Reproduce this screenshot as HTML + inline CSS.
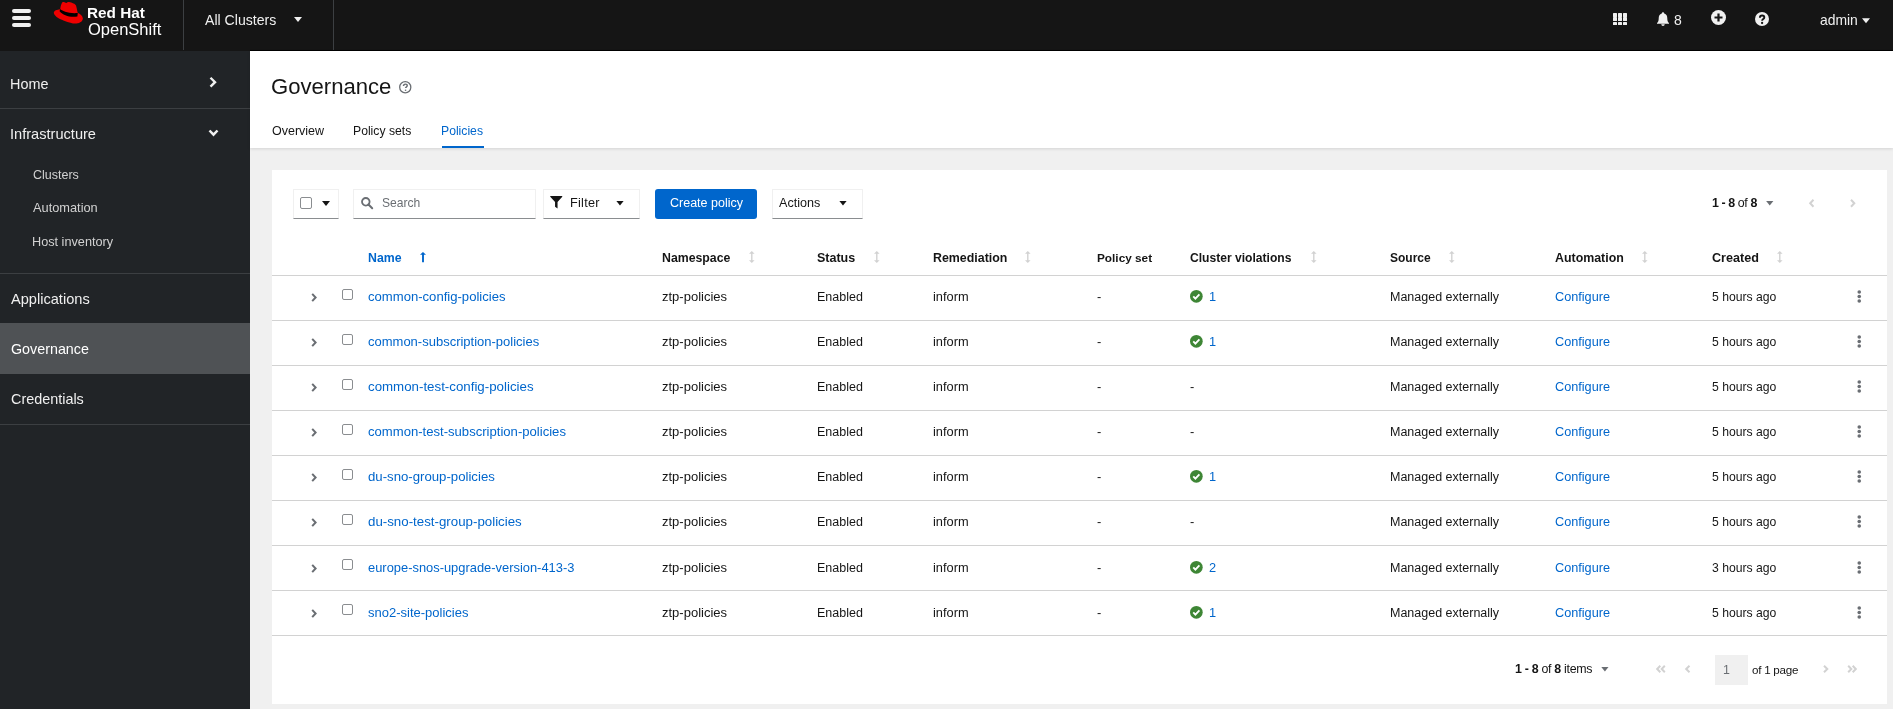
<!DOCTYPE html>
<html><head><meta charset="utf-8"><title>Governance - Policies</title>
<style>
html,body{margin:0;padding:0;width:1893px;height:709px;overflow:hidden;background:#f0f0f0;font-family:"Liberation Sans", sans-serif;}
.t{position:absolute;white-space:nowrap;line-height:1;will-change:transform}
.t b{font-weight:700;}
svg{display:block;overflow:visible}
</style></head><body>
<div style="position:absolute;left:0px;top:0px;width:1893px;height:50px;background:#151515"></div>
<div style="position:absolute;left:250px;top:50px;width:1643px;height:1px;background:#000"></div>
<div style="position:absolute;left:0px;top:50px;width:250px;height:1px;background:#151515"></div>
<div style="position:absolute;left:12px;top:9px;width:19px;height:4px;background:#f0f0f0;border-radius:2px"></div>
<div style="position:absolute;left:12px;top:16px;width:19px;height:4px;background:#f0f0f0;border-radius:2px"></div>
<div style="position:absolute;left:12px;top:23px;width:19px;height:4px;background:#f0f0f0;border-radius:2px"></div>
<svg style="position:absolute;left:50px;top:0px;" width="36" height="27" viewBox="0 0 36 27"><path d="M10.2 9.2 C7 9.6 3.8 10.6 3.8 12.8 C3.8 15.5 8 18.5 14 20.8 C19 22.7 22.5 23.6 25 23.6 C28.5 23.6 32.8 22 32.8 18.5 C32.8 16 30.5 14 28 13 Z" fill="#ee0000"/><path d="M10.2 9.4 C10.4 6.5 11.5 3.5 12.6 2.1 C14 1.8 15.5 2.8 16.4 2.9 C17.2 2.4 18 1.8 19 2 C22 2.5 25.5 4 26 5.5 C26.8 8 27.2 11 27.8 13.3 L27.8 14 L10 10 Z" fill="#ee0000"/><path d="M10.1 9.1 C12 11 19 14 27.8 13.1 L27.4 16.4 C21 17.9 13 15.6 9.6 11.3 Z" fill="#000"/></svg>
<div class="t" style="left:87.30px;top:5px;font-size:15.3px;color:#ffffff;font-weight:700;">Red Hat</div>
<div class="t" style="left:87.50px;top:21px;font-size:16.5px;color:#ffffff;font-weight:400;">OpenShift</div>
<div style="position:absolute;left:183px;top:0px;width:1px;height:50px;background:#3c3f42"></div>
<div style="position:absolute;left:333px;top:0px;width:1px;height:50px;background:#3c3f42"></div>
<div class="t" style="left:204.50px;top:13px;font-size:14.1px;color:#f0f0f0;font-weight:400;">All Clusters</div>
<svg style="position:absolute;left:294px;top:17px;" width="8" height="5" viewBox="0 0 8 5"><path d="M0 0H8L4 5Z" fill="#f0f0f0"/></svg>
<div style="position:absolute;left:1613px;top:13.0px;width:4px;height:3.6px;background:#f0f0f0;border-radius:0.5px"></div>
<div style="position:absolute;left:1613px;top:17.4px;width:4px;height:3.6px;background:#f0f0f0;border-radius:0.5px"></div>
<div style="position:absolute;left:1613px;top:21.8px;width:4px;height:3.6px;background:#f0f0f0;border-radius:0.5px"></div>
<div style="position:absolute;left:1618px;top:13.0px;width:4px;height:3.6px;background:#f0f0f0;border-radius:0.5px"></div>
<div style="position:absolute;left:1618px;top:17.4px;width:4px;height:3.6px;background:#f0f0f0;border-radius:0.5px"></div>
<div style="position:absolute;left:1618px;top:21.8px;width:4px;height:3.6px;background:#f0f0f0;border-radius:0.5px"></div>
<div style="position:absolute;left:1623px;top:13.0px;width:4px;height:3.6px;background:#f0f0f0;border-radius:0.5px"></div>
<div style="position:absolute;left:1623px;top:17.4px;width:4px;height:3.6px;background:#f0f0f0;border-radius:0.5px"></div>
<div style="position:absolute;left:1623px;top:21.8px;width:4px;height:3.6px;background:#f0f0f0;border-radius:0.5px"></div>
<svg style="position:absolute;left:1657px;top:12px;" width="12" height="14" viewBox="0 0 12 14"><path d="M6 0.3 C6.8 0.3 7.2 0.9 7.2 1.5 C9.5 2.1 10.3 4 10.3 6.5 C10.3 9 10.8 10 12 11 V11.8 H0 V11 C1.2 10 1.7 9 1.7 6.5 C1.7 4 2.5 2.1 4.8 1.5 C4.8 0.9 5.2 0.3 6 0.3 Z M4.3 12.3 H7.7 C7.7 13.2 7 13.9 6 13.9 C5 13.9 4.3 13.2 4.3 12.3 Z" fill="#f0f0f0"/></svg>
<div class="t" style="left:1674.00px;top:13px;font-size:14px;color:#f0f0f0;font-weight:400;">8</div>
<svg style="position:absolute;left:1711px;top:10px;" width="15" height="15" viewBox="0 0 15 15"><circle cx="7.5" cy="7.5" r="7.5" fill="#f0f0f0"/><path d="M7.5 3.5V11.5M3.5 7.5H11.5" stroke="#151515" stroke-width="2.2"/></svg>
<svg style="position:absolute;left:1755px;top:12px;" width="14" height="14" viewBox="0 0 14 14"><circle cx="7" cy="7" r="7" fill="#f0f0f0"/><path d="M4.9 5.8 C4.9 4.3 5.9 3.5 7.1 3.5 C8.4 3.5 9.3 4.3 9.3 5.4 C9.3 6.9 7.1 7.1 7.1 8.8" stroke="#151515" stroke-width="1.9" fill="none"/><circle cx="7.1" cy="11" r="1.15" fill="#151515"/></svg>
<div class="t" style="left:1820.00px;top:14px;font-size:13.9px;color:#f0f0f0;font-weight:400;">admin</div>
<svg style="position:absolute;left:1862px;top:17.5px;" width="8" height="5.5" viewBox="0 0 8 5"><path d="M0 0H8L4 5Z" fill="#f0f0f0"/></svg>
<div style="position:absolute;left:0px;top:51px;width:250px;height:658px;background:#212427"></div>
<div style="position:absolute;left:0px;top:108px;width:250px;height:1px;background:#3c3f42"></div>
<div style="position:absolute;left:0px;top:273px;width:250px;height:1px;background:#3c3f42"></div>
<div style="position:absolute;left:0px;top:424px;width:250px;height:1px;background:#3c3f42"></div>
<div style="position:absolute;left:0px;top:323px;width:250px;height:51px;background:#4f5255"></div>
<div class="t" style="left:10.00px;top:77px;font-size:14.4px;color:#f0f0f0;font-weight:400;">Home</div>
<svg style="position:absolute;left:209.3px;top:75.9px;" width="8" height="12.5" viewBox="0 0 8 12"><path d="M1.5 1.5L6 5.9L1.5 10.3" stroke="#f0f0f0" stroke-width="2.4" fill="none"/></svg>
<div class="t" style="left:10.00px;top:127px;font-size:14.6px;color:#f0f0f0;font-weight:400;">Infrastructure</div>
<svg style="position:absolute;left:208.4px;top:129.4px;" width="11" height="8" viewBox="0 0 11 8"><path d="M1.5 1.5L5.5 5.7L9.5 1.5" stroke="#f0f0f0" stroke-width="2.5" fill="none"/></svg>
<div class="t" style="left:32.60px;top:169px;font-size:12.5px;color:#d2d2d2;font-weight:400;">Clusters</div>
<div class="t" style="left:32.60px;top:202px;font-size:12.8px;color:#d2d2d2;font-weight:400;">Automation</div>
<div class="t" style="left:31.60px;top:236px;font-size:12.7px;color:#d2d2d2;font-weight:400;">Host inventory</div>
<div class="t" style="left:10.60px;top:292px;font-size:14.6px;color:#f0f0f0;font-weight:400;">Applications</div>
<div class="t" style="left:10.60px;top:342px;font-size:14.3px;color:#ffffff;font-weight:400;">Governance</div>
<div class="t" style="left:10.60px;top:392px;font-size:14.4px;color:#f0f0f0;font-weight:400;">Credentials</div>
<div style="position:absolute;left:250px;top:51px;width:1643px;height:658px;background:#f0f0f0"></div>
<div style="position:absolute;left:250px;top:51px;width:1643px;height:97px;background:#ffffff;box-shadow:0 1px 3px rgba(3,3,3,0.12)"></div>
<div class="t" style="left:271.20px;top:76px;font-size:22.1px;color:#151515;font-weight:400;">Governance</div>
<svg style="position:absolute;left:399px;top:80.8px;" width="12.5" height="12.5" viewBox="0 0 12 12"><circle cx="6" cy="6" r="5.35" stroke="#6a6e73" stroke-width="1.25" fill="none"/><path d="M4.3 4.9 C4.3 3.7 5 3 6.1 3 C7.2 3 7.9 3.7 7.9 4.6 C7.9 5.5 6.3 5.7 6.3 6.8" stroke="#6a6e73" stroke-width="1.4" fill="none"/><circle cx="6.3" cy="8.9" r="0.8" fill="#6a6e73"/></svg>
<div class="t" style="left:272.00px;top:125px;font-size:12.5px;color:#151515;font-weight:400;">Overview</div>
<div class="t" style="left:352.80px;top:125px;font-size:12.2px;color:#151515;font-weight:400;">Policy sets</div>
<div class="t" style="left:441.20px;top:125px;font-size:12.2px;color:#0066cc;font-weight:400;">Policies</div>
<div style="position:absolute;left:442px;top:146px;width:42px;height:2px;background:#0066cc"></div>
<div style="position:absolute;left:272px;top:170px;width:1615px;height:534px;background:#ffffff"></div>
<div style="position:absolute;left:293px;top:189px;width:46px;height:30px;box-sizing:border-box;border:1px solid #f0f0f0;border-bottom:1px solid #8a8d90"></div>
<div style="position:absolute;left:300px;top:197px;width:12px;height:12px;box-sizing:border-box;border:1px solid #8a8d90;border-radius:2px"></div>
<svg style="position:absolute;left:321.5px;top:200.5px;" width="8" height="5" viewBox="0 0 8 5"><path d="M0 0H8L4 5Z" fill="#151515"/></svg>
<div style="position:absolute;left:353px;top:189px;width:183px;height:30px;box-sizing:border-box;border:1px solid #f0f0f0;border-bottom:1px solid #8a8d90"></div>
<svg style="position:absolute;left:361px;top:197px;" width="12" height="12" viewBox="0 0 12 12"><circle cx="4.8" cy="4.8" r="3.8" stroke="#6a6e73" stroke-width="1.8" fill="none"/><path d="M7.5 7.5L11.2 11.2" stroke="#6a6e73" stroke-width="2" stroke-linecap="round"/></svg>
<div class="t" style="left:382.00px;top:197px;font-size:12.1px;color:#6a6e73;font-weight:400;">Search</div>
<div style="position:absolute;left:543px;top:189px;width:97px;height:30px;box-sizing:border-box;border:1px solid #f0f0f0;border-bottom:1px solid #8a8d90"></div>
<svg style="position:absolute;left:550px;top:196px;" width="12.5" height="13" viewBox="0 0 12 13"><path d="M0 0H12V0.8L7.3 6V12.5L4.8 10.8V6L0 0.8Z" fill="#151515"/></svg>
<div class="t" style="left:569.80px;top:197px;font-size:12.7px;color:#151515;font-weight:400;letter-spacing:0.25px">Filter</div>
<svg style="position:absolute;left:615.5px;top:201px;" width="8" height="4.5" viewBox="0 0 8 5"><path d="M0 0H8L4 5Z" fill="#151515"/></svg>
<div style="position:absolute;left:655px;top:189px;width:102px;height:30px;background:#0066cc;border-radius:3px"></div>
<div class="t" style="left:669.50px;top:197px;font-size:12.5px;color:#ffffff;font-weight:400;">Create policy</div>
<div style="position:absolute;left:772px;top:189px;width:91px;height:30px;box-sizing:border-box;border:1px solid #f0f0f0;border-bottom:1px solid #8a8d90"></div>
<div class="t" style="left:779.40px;top:197px;font-size:12.6px;color:#151515;font-weight:400;">Actions</div>
<svg style="position:absolute;left:838.5px;top:201px;" width="8" height="4.5" viewBox="0 0 8 5"><path d="M0 0H8L4 5Z" fill="#151515"/></svg>
<div class="t" style="left:1711.60px;top:197px;font-size:12.4px;color:#151515;font-weight:400;letter-spacing:-0.4px"><b>1 - 8</b> of <b>8</b></div>
<svg style="position:absolute;left:1766px;top:200.8px;" width="7.5" height="4.5" viewBox="0 0 8 5"><path d="M0 0H8L4 5Z" fill="#6a6e73"/></svg>
<svg style="position:absolute;left:1808.5px;top:198.5px;" width="5.5" height="8.5" viewBox="0 0 5.5 8.5"><path d="M4.5 0.8L1.2 4.25L4.5 7.7" stroke="#d2d2d2" stroke-width="2" fill="none"/></svg>
<svg style="position:absolute;left:1850px;top:198.5px;" width="5.5" height="8.5" viewBox="0 0 5.5 8.5"><path d="M1 0.8L4.3 4.25L1 7.7" stroke="#d2d2d2" stroke-width="2" fill="none"/></svg>
<div style="position:absolute;left:272px;top:275px;width:1615px;height:1px;background:#d2d2d2"></div>
<div class="t" style="left:368.40px;top:252px;font-size:12.3px;color:#0066cc;font-weight:700;">Name</div>
<svg style="position:absolute;left:420px;top:252px;" width="6" height="10.2" viewBox="0 0 6 10.2"><path d="M3 0L6 2.8H3.95V10.2H2.05V2.8H0Z" fill="#0066cc"/></svg>
<div class="t" style="left:662.00px;top:252px;font-size:12.3px;color:#151515;font-weight:700;">Namespace</div>
<svg style="position:absolute;left:749.0px;top:251px;" width="5.6" height="12" viewBox="0 0 5.6 12"><path d="M2.8 0L5.6 2.7H3.5V9.3H5.6L2.8 12L0 9.3H2.1V2.7H0Z" fill="#d2d2d2"/></svg>
<div class="t" style="left:817.40px;top:252px;font-size:12.5px;color:#151515;font-weight:700;">Status</div>
<svg style="position:absolute;left:873.6999999999999px;top:251px;" width="5.6" height="12" viewBox="0 0 5.6 12"><path d="M2.8 0L5.6 2.7H3.5V9.3H5.6L2.8 12L0 9.3H2.1V2.7H0Z" fill="#d2d2d2"/></svg>
<div class="t" style="left:932.80px;top:252px;font-size:12.4px;color:#151515;font-weight:700;">Remediation</div>
<svg style="position:absolute;left:1025.4px;top:251px;" width="5.6" height="12" viewBox="0 0 5.6 12"><path d="M2.8 0L5.6 2.7H3.5V9.3H5.6L2.8 12L0 9.3H2.1V2.7H0Z" fill="#d2d2d2"/></svg>
<div class="t" style="left:1096.50px;top:253px;font-size:11.8px;color:#151515;font-weight:700;">Policy set</div>
<div class="t" style="left:1190.30px;top:252px;font-size:12.1px;color:#151515;font-weight:700;">Cluster violations</div>
<svg style="position:absolute;left:1310.7px;top:251px;" width="5.6" height="12" viewBox="0 0 5.6 12"><path d="M2.8 0L5.6 2.7H3.5V9.3H5.6L2.8 12L0 9.3H2.1V2.7H0Z" fill="#d2d2d2"/></svg>
<div class="t" style="left:1390.20px;top:252px;font-size:12.0px;color:#151515;font-weight:700;">Source</div>
<svg style="position:absolute;left:1449.1000000000001px;top:251px;" width="5.6" height="12" viewBox="0 0 5.6 12"><path d="M2.8 0L5.6 2.7H3.5V9.3H5.6L2.8 12L0 9.3H2.1V2.7H0Z" fill="#d2d2d2"/></svg>
<div class="t" style="left:1554.80px;top:252px;font-size:12.4px;color:#151515;font-weight:700;">Automation</div>
<svg style="position:absolute;left:1642.3000000000002px;top:251px;" width="5.6" height="12" viewBox="0 0 5.6 12"><path d="M2.8 0L5.6 2.7H3.5V9.3H5.6L2.8 12L0 9.3H2.1V2.7H0Z" fill="#d2d2d2"/></svg>
<div class="t" style="left:1711.70px;top:252px;font-size:12.6px;color:#151515;font-weight:700;">Created</div>
<svg style="position:absolute;left:1776.6000000000001px;top:251px;" width="5.6" height="12" viewBox="0 0 5.6 12"><path d="M2.8 0L5.6 2.7H3.5V9.3H5.6L2.8 12L0 9.3H2.1V2.7H0Z" fill="#d2d2d2"/></svg>
<div style="position:absolute;left:272px;top:320px;width:1615px;height:1px;background:#d2d2d2"></div>
<svg style="position:absolute;left:310.5px;top:292.8px;" width="6" height="9" viewBox="0 0 6 9"><path d="M1.2 0.9L4.6 4.5L1.2 8.1" stroke="#6a6e73" stroke-width="2" fill="none"/></svg>
<div style="position:absolute;left:342px;top:289.3px;width:11px;height:11px;box-sizing:border-box;border:1px solid #8a8d90;border-radius:2px"></div>
<div class="t" style="left:368.40px;top:290px;font-size:13.1px;color:#0066cc;font-weight:400;">common-config-policies</div>
<div class="t" style="left:662.00px;top:290px;font-size:13px;color:#151515;font-weight:400;">ztp-policies</div>
<div class="t" style="left:817.40px;top:291px;font-size:12.5px;color:#151515;font-weight:400;">Enabled</div>
<div class="t" style="left:933.00px;top:291px;font-size:12.8px;color:#151515;font-weight:400;">inform</div>
<div class="t" style="left:1097.00px;top:291px;font-size:12.8px;color:#151515;font-weight:400;">-</div>
<svg style="position:absolute;left:1190.3px;top:290.3px;" width="12.7" height="12.7" viewBox="0 0 12 12"><circle cx="6" cy="6" r="6" fill="#3e8635"/><path d="M3.1 6.1L5.1 8.1L8.9 4.2" stroke="#fff" stroke-width="1.8" fill="none"/></svg>
<div class="t" style="left:1208.60px;top:291px;font-size:12.8px;color:#0066cc;font-weight:400;">1</div>
<div class="t" style="left:1390.20px;top:291px;font-size:12.5px;color:#151515;font-weight:400;">Managed externally</div>
<div class="t" style="left:1554.80px;top:291px;font-size:12.7px;color:#0066cc;font-weight:400;">Configure</div>
<div class="t" style="left:1711.70px;top:291px;font-size:12.2px;color:#151515;font-weight:400;">5 hours ago</div>
<svg style="position:absolute;left:1856.8px;top:290.2px;" width="4.5" height="13" viewBox="0 0 4 13"><circle cx="2" cy="2" r="1.8" fill="#6a6e73"/><circle cx="2" cy="6.5" r="1.8" fill="#6a6e73"/><circle cx="2" cy="11" r="1.8" fill="#6a6e73"/></svg>
<div style="position:absolute;left:272px;top:365px;width:1615px;height:1px;background:#d2d2d2"></div>
<svg style="position:absolute;left:310.5px;top:337.8px;" width="6" height="9" viewBox="0 0 6 9"><path d="M1.2 0.9L4.6 4.5L1.2 8.1" stroke="#6a6e73" stroke-width="2" fill="none"/></svg>
<div style="position:absolute;left:342px;top:334.3px;width:11px;height:11px;box-sizing:border-box;border:1px solid #8a8d90;border-radius:2px"></div>
<div class="t" style="left:368.40px;top:335px;font-size:13.0px;color:#0066cc;font-weight:400;">common-subscription-policies</div>
<div class="t" style="left:662.00px;top:335px;font-size:13px;color:#151515;font-weight:400;">ztp-policies</div>
<div class="t" style="left:817.40px;top:336px;font-size:12.5px;color:#151515;font-weight:400;">Enabled</div>
<div class="t" style="left:933.00px;top:336px;font-size:12.8px;color:#151515;font-weight:400;">inform</div>
<div class="t" style="left:1097.00px;top:336px;font-size:12.8px;color:#151515;font-weight:400;">-</div>
<svg style="position:absolute;left:1190.3px;top:335.3px;" width="12.7" height="12.7" viewBox="0 0 12 12"><circle cx="6" cy="6" r="6" fill="#3e8635"/><path d="M3.1 6.1L5.1 8.1L8.9 4.2" stroke="#fff" stroke-width="1.8" fill="none"/></svg>
<div class="t" style="left:1208.60px;top:336px;font-size:12.8px;color:#0066cc;font-weight:400;">1</div>
<div class="t" style="left:1390.20px;top:336px;font-size:12.5px;color:#151515;font-weight:400;">Managed externally</div>
<div class="t" style="left:1554.80px;top:336px;font-size:12.7px;color:#0066cc;font-weight:400;">Configure</div>
<div class="t" style="left:1711.70px;top:336px;font-size:12.2px;color:#151515;font-weight:400;">5 hours ago</div>
<svg style="position:absolute;left:1856.8px;top:335.2px;" width="4.5" height="13" viewBox="0 0 4 13"><circle cx="2" cy="2" r="1.8" fill="#6a6e73"/><circle cx="2" cy="6.5" r="1.8" fill="#6a6e73"/><circle cx="2" cy="11" r="1.8" fill="#6a6e73"/></svg>
<div style="position:absolute;left:272px;top:410px;width:1615px;height:1px;background:#d2d2d2"></div>
<svg style="position:absolute;left:310.5px;top:382.8px;" width="6" height="9" viewBox="0 0 6 9"><path d="M1.2 0.9L4.6 4.5L1.2 8.1" stroke="#6a6e73" stroke-width="2" fill="none"/></svg>
<div style="position:absolute;left:342px;top:379.3px;width:11px;height:11px;box-sizing:border-box;border:1px solid #8a8d90;border-radius:2px"></div>
<div class="t" style="left:368.40px;top:380px;font-size:13.3px;color:#0066cc;font-weight:400;">common-test-config-policies</div>
<div class="t" style="left:662.00px;top:380px;font-size:13px;color:#151515;font-weight:400;">ztp-policies</div>
<div class="t" style="left:817.40px;top:381px;font-size:12.5px;color:#151515;font-weight:400;">Enabled</div>
<div class="t" style="left:933.00px;top:381px;font-size:12.8px;color:#151515;font-weight:400;">inform</div>
<div class="t" style="left:1097.00px;top:381px;font-size:12.8px;color:#151515;font-weight:400;">-</div>
<div class="t" style="left:1190.30px;top:381px;font-size:12.8px;color:#151515;font-weight:400;">-</div>
<div class="t" style="left:1390.20px;top:381px;font-size:12.5px;color:#151515;font-weight:400;">Managed externally</div>
<div class="t" style="left:1554.80px;top:381px;font-size:12.7px;color:#0066cc;font-weight:400;">Configure</div>
<div class="t" style="left:1711.70px;top:381px;font-size:12.2px;color:#151515;font-weight:400;">5 hours ago</div>
<svg style="position:absolute;left:1856.8px;top:380.2px;" width="4.5" height="13" viewBox="0 0 4 13"><circle cx="2" cy="2" r="1.8" fill="#6a6e73"/><circle cx="2" cy="6.5" r="1.8" fill="#6a6e73"/><circle cx="2" cy="11" r="1.8" fill="#6a6e73"/></svg>
<div style="position:absolute;left:272px;top:455px;width:1615px;height:1px;background:#d2d2d2"></div>
<svg style="position:absolute;left:310.5px;top:427.8px;" width="6" height="9" viewBox="0 0 6 9"><path d="M1.2 0.9L4.6 4.5L1.2 8.1" stroke="#6a6e73" stroke-width="2" fill="none"/></svg>
<div style="position:absolute;left:342px;top:424.3px;width:11px;height:11px;box-sizing:border-box;border:1px solid #8a8d90;border-radius:2px"></div>
<div class="t" style="left:368.40px;top:425px;font-size:13.1px;color:#0066cc;font-weight:400;">common-test-subscription-policies</div>
<div class="t" style="left:662.00px;top:425px;font-size:13px;color:#151515;font-weight:400;">ztp-policies</div>
<div class="t" style="left:817.40px;top:426px;font-size:12.5px;color:#151515;font-weight:400;">Enabled</div>
<div class="t" style="left:933.00px;top:426px;font-size:12.8px;color:#151515;font-weight:400;">inform</div>
<div class="t" style="left:1097.00px;top:426px;font-size:12.8px;color:#151515;font-weight:400;">-</div>
<div class="t" style="left:1190.30px;top:426px;font-size:12.8px;color:#151515;font-weight:400;">-</div>
<div class="t" style="left:1390.20px;top:426px;font-size:12.5px;color:#151515;font-weight:400;">Managed externally</div>
<div class="t" style="left:1554.80px;top:426px;font-size:12.7px;color:#0066cc;font-weight:400;">Configure</div>
<div class="t" style="left:1711.70px;top:426px;font-size:12.2px;color:#151515;font-weight:400;">5 hours ago</div>
<svg style="position:absolute;left:1856.8px;top:425.2px;" width="4.5" height="13" viewBox="0 0 4 13"><circle cx="2" cy="2" r="1.8" fill="#6a6e73"/><circle cx="2" cy="6.5" r="1.8" fill="#6a6e73"/><circle cx="2" cy="11" r="1.8" fill="#6a6e73"/></svg>
<div style="position:absolute;left:272px;top:500px;width:1615px;height:1px;background:#d2d2d2"></div>
<svg style="position:absolute;left:310.5px;top:472.8px;" width="6" height="9" viewBox="0 0 6 9"><path d="M1.2 0.9L4.6 4.5L1.2 8.1" stroke="#6a6e73" stroke-width="2" fill="none"/></svg>
<div style="position:absolute;left:342px;top:469.3px;width:11px;height:11px;box-sizing:border-box;border:1px solid #8a8d90;border-radius:2px"></div>
<div class="t" style="left:368.40px;top:470px;font-size:13.2px;color:#0066cc;font-weight:400;">du-sno-group-policies</div>
<div class="t" style="left:662.00px;top:470px;font-size:13px;color:#151515;font-weight:400;">ztp-policies</div>
<div class="t" style="left:817.40px;top:471px;font-size:12.5px;color:#151515;font-weight:400;">Enabled</div>
<div class="t" style="left:933.00px;top:471px;font-size:12.8px;color:#151515;font-weight:400;">inform</div>
<div class="t" style="left:1097.00px;top:471px;font-size:12.8px;color:#151515;font-weight:400;">-</div>
<svg style="position:absolute;left:1190.3px;top:470.3px;" width="12.7" height="12.7" viewBox="0 0 12 12"><circle cx="6" cy="6" r="6" fill="#3e8635"/><path d="M3.1 6.1L5.1 8.1L8.9 4.2" stroke="#fff" stroke-width="1.8" fill="none"/></svg>
<div class="t" style="left:1208.60px;top:471px;font-size:12.8px;color:#0066cc;font-weight:400;">1</div>
<div class="t" style="left:1390.20px;top:471px;font-size:12.5px;color:#151515;font-weight:400;">Managed externally</div>
<div class="t" style="left:1554.80px;top:471px;font-size:12.7px;color:#0066cc;font-weight:400;">Configure</div>
<div class="t" style="left:1711.70px;top:471px;font-size:12.2px;color:#151515;font-weight:400;">5 hours ago</div>
<svg style="position:absolute;left:1856.8px;top:470.2px;" width="4.5" height="13" viewBox="0 0 4 13"><circle cx="2" cy="2" r="1.8" fill="#6a6e73"/><circle cx="2" cy="6.5" r="1.8" fill="#6a6e73"/><circle cx="2" cy="11" r="1.8" fill="#6a6e73"/></svg>
<div style="position:absolute;left:272px;top:545px;width:1615px;height:1px;background:#d2d2d2"></div>
<svg style="position:absolute;left:310.5px;top:517.8px;" width="6" height="9" viewBox="0 0 6 9"><path d="M1.2 0.9L4.6 4.5L1.2 8.1" stroke="#6a6e73" stroke-width="2" fill="none"/></svg>
<div style="position:absolute;left:342px;top:514.3px;width:11px;height:11px;box-sizing:border-box;border:1px solid #8a8d90;border-radius:2px"></div>
<div class="t" style="left:368.40px;top:515px;font-size:13.3px;color:#0066cc;font-weight:400;">du-sno-test-group-policies</div>
<div class="t" style="left:662.00px;top:515px;font-size:13px;color:#151515;font-weight:400;">ztp-policies</div>
<div class="t" style="left:817.40px;top:516px;font-size:12.5px;color:#151515;font-weight:400;">Enabled</div>
<div class="t" style="left:933.00px;top:516px;font-size:12.8px;color:#151515;font-weight:400;">inform</div>
<div class="t" style="left:1097.00px;top:516px;font-size:12.8px;color:#151515;font-weight:400;">-</div>
<div class="t" style="left:1190.30px;top:516px;font-size:12.8px;color:#151515;font-weight:400;">-</div>
<div class="t" style="left:1390.20px;top:516px;font-size:12.5px;color:#151515;font-weight:400;">Managed externally</div>
<div class="t" style="left:1554.80px;top:516px;font-size:12.7px;color:#0066cc;font-weight:400;">Configure</div>
<div class="t" style="left:1711.70px;top:516px;font-size:12.2px;color:#151515;font-weight:400;">5 hours ago</div>
<svg style="position:absolute;left:1856.8px;top:515.2px;" width="4.5" height="13" viewBox="0 0 4 13"><circle cx="2" cy="2" r="1.8" fill="#6a6e73"/><circle cx="2" cy="6.5" r="1.8" fill="#6a6e73"/><circle cx="2" cy="11" r="1.8" fill="#6a6e73"/></svg>
<div style="position:absolute;left:272px;top:590px;width:1615px;height:1px;background:#d2d2d2"></div>
<svg style="position:absolute;left:310.5px;top:563.8px;" width="6" height="9" viewBox="0 0 6 9"><path d="M1.2 0.9L4.6 4.5L1.2 8.1" stroke="#6a6e73" stroke-width="2" fill="none"/></svg>
<div style="position:absolute;left:342px;top:559.3px;width:11px;height:11px;box-sizing:border-box;border:1px solid #8a8d90;border-radius:2px"></div>
<div class="t" style="left:368.40px;top:562px;font-size:12.9px;color:#0066cc;font-weight:400;">europe-snos-upgrade-version-413-3</div>
<div class="t" style="left:662.00px;top:561px;font-size:13px;color:#151515;font-weight:400;">ztp-policies</div>
<div class="t" style="left:817.40px;top:562px;font-size:12.5px;color:#151515;font-weight:400;">Enabled</div>
<div class="t" style="left:933.00px;top:562px;font-size:12.8px;color:#151515;font-weight:400;">inform</div>
<div class="t" style="left:1097.00px;top:562px;font-size:12.8px;color:#151515;font-weight:400;">-</div>
<svg style="position:absolute;left:1190.3px;top:561.3px;" width="12.7" height="12.7" viewBox="0 0 12 12"><circle cx="6" cy="6" r="6" fill="#3e8635"/><path d="M3.1 6.1L5.1 8.1L8.9 4.2" stroke="#fff" stroke-width="1.8" fill="none"/></svg>
<div class="t" style="left:1208.60px;top:562px;font-size:12.8px;color:#0066cc;font-weight:400;">2</div>
<div class="t" style="left:1390.20px;top:562px;font-size:12.5px;color:#151515;font-weight:400;">Managed externally</div>
<div class="t" style="left:1554.80px;top:562px;font-size:12.7px;color:#0066cc;font-weight:400;">Configure</div>
<div class="t" style="left:1711.70px;top:562px;font-size:12.2px;color:#151515;font-weight:400;">3 hours ago</div>
<svg style="position:absolute;left:1856.8px;top:561.2px;" width="4.5" height="13" viewBox="0 0 4 13"><circle cx="2" cy="2" r="1.8" fill="#6a6e73"/><circle cx="2" cy="6.5" r="1.8" fill="#6a6e73"/><circle cx="2" cy="11" r="1.8" fill="#6a6e73"/></svg>
<div style="position:absolute;left:272px;top:635px;width:1615px;height:1px;background:#d2d2d2"></div>
<svg style="position:absolute;left:310.5px;top:608.8px;" width="6" height="9" viewBox="0 0 6 9"><path d="M1.2 0.9L4.6 4.5L1.2 8.1" stroke="#6a6e73" stroke-width="2" fill="none"/></svg>
<div style="position:absolute;left:342px;top:604.3px;width:11px;height:11px;box-sizing:border-box;border:1px solid #8a8d90;border-radius:2px"></div>
<div class="t" style="left:368.40px;top:606px;font-size:13.0px;color:#0066cc;font-weight:400;">sno2-site-policies</div>
<div class="t" style="left:662.00px;top:606px;font-size:13px;color:#151515;font-weight:400;">ztp-policies</div>
<div class="t" style="left:817.40px;top:607px;font-size:12.5px;color:#151515;font-weight:400;">Enabled</div>
<div class="t" style="left:933.00px;top:607px;font-size:12.8px;color:#151515;font-weight:400;">inform</div>
<div class="t" style="left:1097.00px;top:607px;font-size:12.8px;color:#151515;font-weight:400;">-</div>
<svg style="position:absolute;left:1190.3px;top:606.3px;" width="12.7" height="12.7" viewBox="0 0 12 12"><circle cx="6" cy="6" r="6" fill="#3e8635"/><path d="M3.1 6.1L5.1 8.1L8.9 4.2" stroke="#fff" stroke-width="1.8" fill="none"/></svg>
<div class="t" style="left:1208.60px;top:607px;font-size:12.8px;color:#0066cc;font-weight:400;">1</div>
<div class="t" style="left:1390.20px;top:607px;font-size:12.5px;color:#151515;font-weight:400;">Managed externally</div>
<div class="t" style="left:1554.80px;top:607px;font-size:12.7px;color:#0066cc;font-weight:400;">Configure</div>
<div class="t" style="left:1711.70px;top:607px;font-size:12.2px;color:#151515;font-weight:400;">5 hours ago</div>
<svg style="position:absolute;left:1856.8px;top:606.2px;" width="4.5" height="13" viewBox="0 0 4 13"><circle cx="2" cy="2" r="1.8" fill="#6a6e73"/><circle cx="2" cy="6.5" r="1.8" fill="#6a6e73"/><circle cx="2" cy="11" r="1.8" fill="#6a6e73"/></svg>
<div class="t" style="left:1514.80px;top:663px;font-size:12.4px;color:#151515;font-weight:400;letter-spacing:-0.3px"><b>1 - 8</b> of <b>8</b> items</div>
<svg style="position:absolute;left:1601px;top:667px;" width="7.8" height="4.5" viewBox="0 0 8 5"><path d="M0 0H8L4 5Z" fill="#6a6e73"/></svg>
<svg style="position:absolute;left:1655.5px;top:664.7px;" width="10" height="8" viewBox="0 0 10 8"><path d="M4.3 0.8L1.2 4L4.3 7.2M8.8 0.8L5.7 4L8.8 7.2" stroke="#d2d2d2" stroke-width="2" fill="none"/></svg>
<svg style="position:absolute;left:1684.6px;top:664.7px;" width="5.5" height="8" viewBox="0 0 5.5 8"><path d="M4.5 0.8L1.2 4L4.5 7.2" stroke="#d2d2d2" stroke-width="2" fill="none"/></svg>
<div style="position:absolute;left:1715px;top:655px;width:33px;height:30px;background:#f0f0f0"></div>
<div class="t" style="left:1723.40px;top:664px;font-size:12.4px;color:#6a6e73;font-weight:400;">1</div>
<div class="t" style="left:1751.80px;top:664px;font-size:11.6px;color:#151515;font-weight:400;letter-spacing:-0.25px">of 1 page</div>
<svg style="position:absolute;left:1822.8px;top:664.7px;" width="5.5" height="8" viewBox="0 0 5.5 8"><path d="M1 0.8L4.3 4L1 7.2" stroke="#d2d2d2" stroke-width="2" fill="none"/></svg>
<svg style="position:absolute;left:1847.3px;top:664.7px;" width="10" height="8" viewBox="0 0 10 8"><path d="M1.2 0.8L4.3 4L1.2 7.2M5.7 0.8L8.8 4L5.7 7.2" stroke="#d2d2d2" stroke-width="2" fill="none"/></svg>
</body></html>
